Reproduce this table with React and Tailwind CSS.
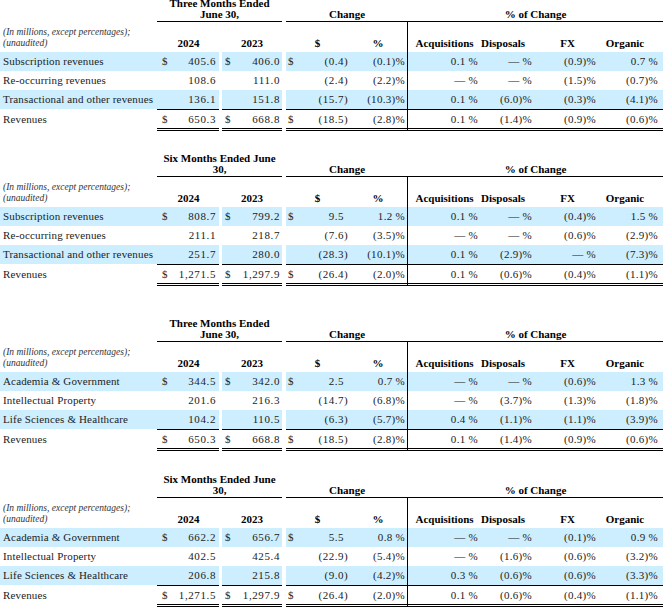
import React from "react";

const tables = [
  {
    title: ["Three Months Ended", "June 30,"],
    gap: "-mt-[3px]",
    rows: [
      ["Subscription revenues", "405.6", "406.0", "(0.4)", "(0.1)%", "0.1 %", "— %", "(0.9)%", "0.7 %"],
      ["Re-occurring revenues", "108.6", "111.0", "(2.4)", "(2.2)%", "— %", "— %", "(1.5)%", "(0.7)%"],
      ["Transactional and other revenues", "136.1", "151.8", "(15.7)", "(10.3)%", "0.1 %", "(6.0)%", "(0.3)%", "(4.1)%"],
      ["Revenues", "650.3", "668.8", "(18.5)", "(2.8)%", "0.1 %", "(1.4)%", "(0.9)%", "(0.6)%"],
    ],
  },
  {
    title: ["Six Months Ended June", "30,"],
    gap: "mt-[21px]",
    rows: [
      ["Subscription revenues", "808.7", "799.2", "9.5", "1.2 %", "0.1 %", "— %", "(0.4)%", "1.5 %"],
      ["Re-occurring revenues", "211.1", "218.7", "(7.6)", "(3.5)%", "— %", "— %", "(0.6)%", "(2.9)%"],
      ["Transactional and other revenues", "251.7", "280.0", "(28.3)", "(10.1)%", "0.1 %", "(2.9)%", "— %", "(7.3)%"],
      ["Revenues", "1,271.5", "1,297.9", "(26.4)", "(2.0)%", "0.1 %", "(0.6)%", "(0.4)%", "(1.1)%"],
    ],
  },
  {
    title: ["Three Months Ended", "June 30,"],
    gap: "mt-[31px]",
    rows: [
      ["Academia & Government", "344.5", "342.0", "2.5", "0.7 %", "— %", "— %", "(0.6)%", "1.3 %"],
      ["Intellectual Property", "201.6", "216.3", "(14.7)", "(6.8)%", "— %", "(3.7)%", "(1.3)%", "(1.8)%"],
      ["Life Sciences & Healthcare", "104.2", "110.5", "(6.3)", "(5.7)%", "0.4 %", "(1.1)%", "(1.1)%", "(3.9)%"],
      ["Revenues", "650.3", "668.8", "(18.5)", "(2.8)%", "0.1 %", "(1.4)%", "(0.9)%", "(0.6)%"],
    ],
  },
  {
    title: ["Six Months Ended June", "30,"],
    gap: "mt-[22px]",
    rows: [
      ["Academia & Government", "662.2", "656.7", "5.5", "0.8 %", "— %", "— %", "(0.1)%", "0.9 %"],
      ["Intellectual Property", "402.5", "425.4", "(22.9)", "(5.4)%", "— %", "(1.6)%", "(0.6)%", "(3.2)%"],
      ["Life Sciences & Healthcare", "206.8", "215.8", "(9.0)", "(4.2)%", "0.3 %", "(0.6)%", "(0.6)%", "(3.3)%"],
      ["Revenues", "1,271.5", "1,297.9", "(26.4)", "(2.0)%", "0.1 %", "(0.6)%", "(0.4)%", "(1.1)%"],
    ],
  },
];

// dollar change: digits line up, closing paren hangs to the right
const Amt = ({ v }) => {
  const neg = v.startsWith("(");
  return (
    <span className="flex">
      <span>{neg ? v.slice(0, -1) : v}</span>
      <span className="w-[4px]">{neg ? ")" : ""}</span>
    </span>
  );
};

const DataRow = ({ r, blue, total, dollar }) => {
  const bg = blue ? "bg-[#cceeff]" : "bg-white";
  const h = total ? "h-[22px] border-t border-b-[3px] border-double" : "h-[19px]";
  const num = `${h} ${bg} ${total ? "border-black" : ""} flex items-center`;
  const plain = `${h} ${total ? "border-transparent" : ""} flex items-center`;
  const pct = "tracking-[0.3px] whitespace-nowrap";
  return (
    <div className="flex text-[11px] text-[#222]">
      <div className={`${plain} ${bg} w-[157px] pl-[3px] tracking-[0.15px] whitespace-nowrap`}>{r[0]}</div>
      <div className={`${num} w-[62px] justify-between pl-[5px] pr-[3px] tracking-[0.6px]`}>
        <span>{dollar ? "$" : ""}</span>
        <span>{r[1]}</span>
      </div>
      <div className={`${plain} w-[3px] bg-white`} />
      <div className={`${num} w-[60px] justify-between pl-[3px] pr-[2px] tracking-[0.6px]`}>
        <span>{dollar ? "$" : ""}</span>
        <span>{r[2]}</span>
      </div>
      <div className={`${plain} w-[4px] bg-white`} />
      <div className={`${num} w-[63px] justify-between pl-[2px] pr-[1px] tracking-[0.5px]`}>
        <span>{dollar ? "$" : ""}</span>
        <Amt v={r[3]} />
      </div>
      <div className={`${num} w-[59px] justify-end pr-[2px] border-r border-r-black ${pct}`}>{r[4]}</div>
      <div className={`${num} w-[73px] justify-end pr-[3px] ${pct}`}>{r[5]}</div>
      <div className={`${num} w-[57px] justify-end pr-[6px] ${pct}`}>{r[6]}</div>
      <div className={`${num} w-[62px] justify-end pr-[4px] ${pct}`}>{r[7]}</div>
      <div className={`${num} w-[63px] justify-end pr-[5px] ${pct}`}>{r[8]}</div>
    </div>
  );
};

const Table = ({ t }) => (
  <div className={`${t.gap} flex flex-col`}>
    {/* period / change headings */}
    <div className="flex h-[25px] text-[11px] font-bold text-black leading-[11px]">
      <div className="w-[157px]" />
      <div className="w-[125px] flex flex-col items-center justify-end pb-[1px] border-b border-black">
        <span>{t.title[0]}</span>
        <span>{t.title[1]}</span>
      </div>
      <div className="w-[4px]" />
      <div className="w-[122px] flex items-end justify-center pb-[1px] border-b border-black">Change</div>
      <div className="w-[255px] flex items-end justify-center pb-[1px] border-b border-black">% of Change</div>
    </div>

    {/* column headings */}
    <div className="flex h-[30px] text-[11px] font-bold text-black leading-[11px]">
      <div className="w-[157px] flex flex-col justify-end pb-[3px] pl-[3px] text-[9.5px] italic font-normal text-[#333]">
        <span>(In millions, except percentages);</span>
        <span>(unaudited)</span>
      </div>
      <div className="w-[62px] flex items-end justify-center pb-[3px] pl-[1px]">2024</div>
      <div className="w-[3px]" />
      <div className="w-[60px] flex items-end justify-center pb-[3px]">2023</div>
      <div className="w-[4px]" />
      <div className="w-[63px] flex items-end justify-center pb-[3px]">$</div>
      <div className="w-[59px] flex items-end justify-center pb-[3px] border-r border-black">%</div>
      <div className="w-[73px] flex items-end justify-center pb-[3px]">Acquisitions</div>
      <div className="w-[57px] flex items-end justify-center pb-[3px] pr-[13px]">Disposals</div>
      <div className="w-[62px] flex items-end justify-center pb-[3px] pr-[3px]">FX</div>
      <div className="w-[63px] flex items-end justify-center pb-[3px] pr-[13px]">Organic</div>
    </div>

    {t.rows.map((r, i) => (
      <DataRow key={i} r={r} blue={i % 2 === 0 && i < 3} total={i === 3} dollar={i === 0 || i === 3} />
    ))}
  </div>
);

export default function App() {
  return (
    <div
      className="w-[663px] h-[610px] overflow-hidden bg-white"
      style={{ fontFamily: '"Liberation Serif", "Times New Roman", serif' }}
    >
      {tables.map((t, i) => (
        <Table key={i} t={t} />
      ))}
    </div>
  );
}
